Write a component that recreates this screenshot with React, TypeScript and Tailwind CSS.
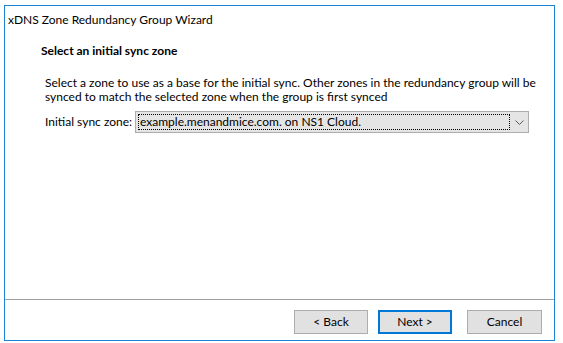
export default function App() {
  return (
    <div
      className="h-[343px] w-[563px] bg-white pl-[4px] pt-[5px] text-[12px] leading-[14px] text-black"
      style={{ fontFamily: 'Lato, "Noto Sans", sans-serif' }}
    >
      <div className="flex h-[336px] w-[551px] flex-col border border-[#1883d7] bg-white">
        <div className="pl-[3px] pt-[6px] leading-[16px]">xDNS Zone Redundancy Group Wizard</div>

        <div className="flex-1">
          <div className="mt-[16px] pl-[36px] font-bold">Select an initial sync zone</div>
          <p className="mt-[18px] whitespace-nowrap pl-[40px]">
            Select a zone to use as a base for the initial sync. Other zones in the redundancy group will be
            <br />
            synced to match the selected zone when the group is first synced
          </p>
          <div className="mt-[7px] flex items-center pl-[40px]">
            <span className="w-[90px] whitespace-nowrap">Initial sync zone:</span>
            <div className="flex h-[22px] w-[394px] items-center border border-[#adadad] bg-[#e5e5e5] p-[2px]">
              <div className="flex h-full w-[372px] items-center border border-dotted border-black pl-[1px]">
                example.menandmice.com. on NS1 Cloud.
              </div>
              <svg className="ml-[5px]" width="9" height="5" viewBox="0 0 9 5" fill="none">
                <path d="M0.5 0.5 L4.5 4.5 L8.5 0.5" stroke="#5a5a5a" strokeWidth="1" />
              </svg>
            </div>
          </div>
        </div>

        <div className="h-px bg-[#a0a0a0]" />

        <div className="flex h-[40px] items-start justify-end pr-[12px] pt-[10px]">
          <button
            type="button"
            className="h-[24px] w-[74px] border border-[#adadad] bg-[#e1e1e1]"
          >
            &lt; Back
          </button>
          <button
            type="button"
            className="ml-[10px] h-[24px] w-[74px] border-2 border-[#0078d7] bg-[#e1e1e1]"
          >
            Next &gt;
          </button>
          <button
            type="button"
            className="ml-[15px] h-[24px] w-[75px] border border-[#adadad] bg-[#e1e1e1]"
          >
            Cancel
          </button>
        </div>
      </div>
    </div>
  );
}
